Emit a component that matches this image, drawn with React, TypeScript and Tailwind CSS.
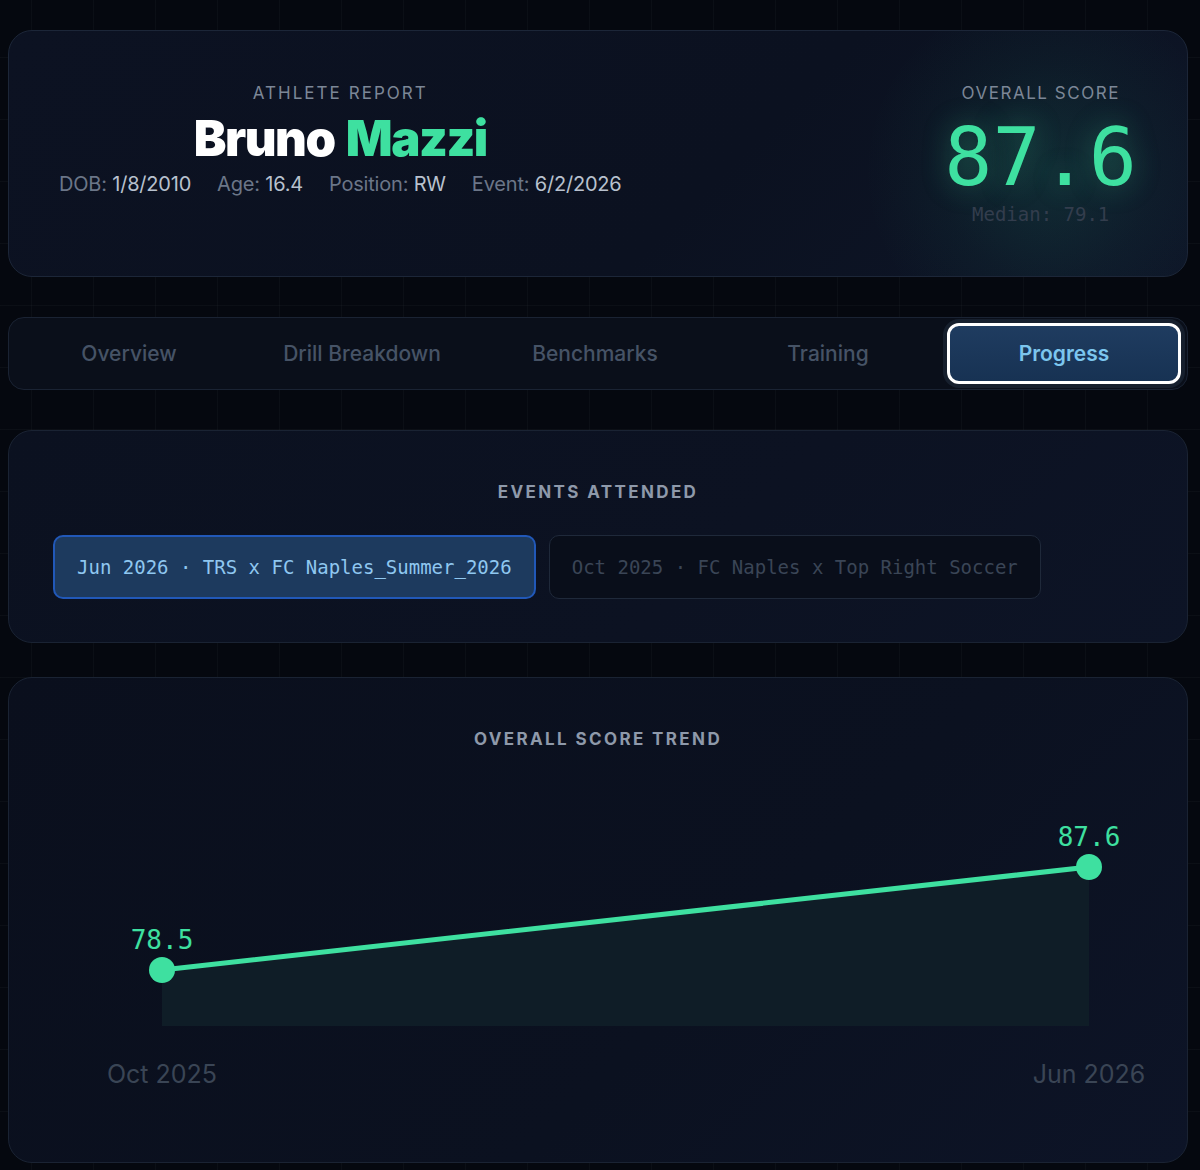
import React from 'react'

const tabs = ['Overview', 'Drill Breakdown', 'Benchmarks', 'Training', 'Progress']

const events = [
    { id: 1, label: 'Jun 2026 · TRS x FC Naples_Summer_2026', active: true },
    { id: 2, label: 'Oct 2025 · FC Naples x Top Right Soccer', active: false },
]

const meta = [
    { k: 'DOB:', v: '1/8/2010' },
    { k: 'Age:', v: '16.4' },
    { k: 'Position:', v: 'RW' },
    { k: 'Event:', v: '6/2/2026' },
]

const sans = "font-['Inter','DejaVu_Sans',sans-serif]"
const mono = "font-['DejaVu_Sans_Mono','Liberation_Mono',monospace]"

const TrendChart = () => {
    // pixel coords inside the card (card is 1180 wide)
    const p1 = { x: 154, y: 199 }
    const p2 = { x: 1081, y: 96 }
    const base = 255

    return (
        <svg width="1180" height="340" viewBox="0 0 1180 340" className='block'>
            <polygon points={`${p1.x},${p1.y} ${p2.x},${p2.y} ${p2.x},${base} ${p1.x},${base}`} fill='#0f1d27' />
            <line x1={p1.x} y1={p1.y} x2={p2.x} y2={p2.y} stroke='#3ee0a0' strokeWidth='5' strokeLinecap='round' />
            <circle cx={p1.x} cy={p1.y} r='13' fill='#3ee0a0' />
            <circle cx={p2.x} cy={p2.y} r='13' fill='#3ee0a0' />
            <text x={p1.x} y='178' textAnchor='middle' fill='#3ee0a0' fontSize='26' fontFamily='DejaVu Sans Mono, monospace'>78.5</text>
            <text x={p2.x} y='75' textAnchor='middle' fill='#3ee0a0' fontSize='26' fontFamily='DejaVu Sans Mono, monospace'>87.6</text>
            <text x={p1.x} y='312' textAnchor='middle' fill='#3a4555' fontSize='25' fontFamily='Inter, sans-serif'>Oct 2025</text>
            <text x={p2.x} y='312' textAnchor='middle' fill='#3a4555' fontSize='25' fontFamily='Inter, sans-serif'>Jun 2026</text>
        </svg>
    )
}

const App = () => {
    return (
        <div className={`min-h-[1170px] w-[1200px] bg-[#05080f] bg-[linear-gradient(rgba(148,163,184,0.045)_1px,transparent_1px),linear-gradient(90deg,rgba(148,163,184,0.045)_1px,transparent_1px)] bg-[size:62px_62px] bg-[position:31px_-5px] pl-2 pr-3 pt-[30px] pb-2 ${sans}`}>

            {/* header */}
            <div className='relative h-[247px] overflow-hidden rounded-[24px] border border-[#1c2638] bg-[linear-gradient(135deg,#0c1222,#0b1120_60%,#0e1628)] pl-[50px] pr-[50px] pt-[50px]'>
                <div className='pointer-events-none absolute right-[-50px] top-[-50px] h-[380px] w-[380px] rounded-full bg-[radial-gradient(circle,rgba(45,212,160,0.13),rgba(45,212,160,0.04)_40%,transparent_68%)]' />
                <div className='relative flex items-start justify-between'>
                    <div className='flex flex-col items-center'>
                        <p className='text-[17px] leading-[24px] tracking-[0.12em] text-[#7c8797]'>ATHLETE REPORT</p>
                        <h1 className='mt-[6px] text-[49px] font-black leading-[56px] tracking-[-0.03em] text-white'>
                            Bruno <span className='ml-[3px] text-[#3ee0a0]'>Mazzi</span>
                        </h1>
                        <div className='mt-[2px] flex gap-[26px] text-[20px] leading-[30px] tracking-[-0.01em]'>
                            {meta.map((m) => (
                                <span key={m.k}>
                                    <span className='text-[#6b7688]'>{m.k}</span>{' '}
                                    <span className='text-[#b8c1ce]'>{m.v}</span>
                                </span>
                            ))}
                        </div>
                    </div>

                    <div className='flex flex-col items-center'>
                        <p className='text-[17px] leading-[24px] tracking-[0.09em] text-[#7c8797]'>OVERALL SCORE</p>
                        <p className={`mt-[8px] text-[80px] leading-[90px] text-[#3ee0a0] [text-shadow:0_0_28px_rgba(62,224,160,0.35)] ${mono}`}>87.6</p>
                        <p className={`-mt-[1px] text-[19px] leading-[24px] text-[#333d4d] ${mono}`}>Median: 79.1</p>
                    </div>
                </div>
            </div>

            {/* tabs */}
            <div className='mt-[40px] flex h-[73px] items-center gap-[5px] rounded-[16px] border border-[#1a2333] bg-[#0a0f1a] px-[6px]'>
                {tabs.map((t) => (
                    t === 'Progress' ? (
                        <div key={t} className='flex h-[61px] flex-1 items-center justify-center rounded-[12px] border-[3px] border-white bg-[linear-gradient(180deg,#1f3c60,#173253)] text-[21px] font-semibold text-[#7cc6ee] shadow-[0_0_0_4px_rgba(30,41,59,0.6)]'>
                            {t}
                        </div>
                    ) : (
                        <div key={t} className='flex h-[61px] flex-1 items-center justify-center text-[21px] font-medium text-[#465366]'>
                            {t}
                        </div>
                    )
                ))}
            </div>

            {/* events */}
            <div className='mt-[40px] h-[213px] rounded-[24px] border border-[#1a2333] bg-[linear-gradient(135deg,#0b1120,#0c1222_60%,#0d1426)] px-[44px] pt-[49px]'>
                <h2 className='text-center text-[17px] font-bold leading-[24px] tracking-[0.14em] text-[#8e99aa]'>EVENTS ATTENDED</h2>
                <div className='mt-[31px] flex gap-[13px]'>
                    {events.map((e) => (
                        <div
                            key={e.id}
                            className={
                                e.active
                                    ? `flex h-[64px] items-center rounded-[10px] border-2 border-[#2158b8] bg-[#1d3a5e] px-[22px] text-[19px] text-[#8fc7f0] ${mono}`
                                    : `flex h-[64px] items-center rounded-[10px] border border-[#1f293a] bg-[#090e1a] px-[22px] text-[19px] text-[#3a4556] ${mono}`
                            }
                        >
                            {e.label}
                        </div>
                    ))}
                </div>
            </div>

            {/* trend */}
            <div className='mt-[34px] h-[486px] rounded-[24px] border border-[#1a2333] bg-[linear-gradient(135deg,#0a0f1d,#0b1120_60%,#0d1427)] pt-[49px]'>
                <h2 className='text-center text-[17px] font-bold leading-[24px] tracking-[0.14em] text-[#8e99aa]'>OVERALL SCORE TREND</h2>
                <div className='mt-[20px] -ml-px'>
                    <TrendChart />
                </div>
            </div>
        </div>
    )
}

export default App
